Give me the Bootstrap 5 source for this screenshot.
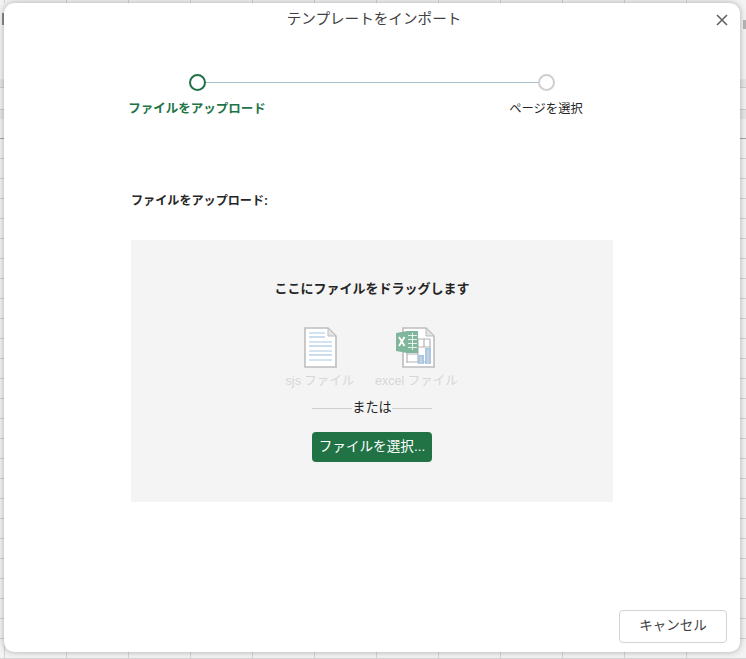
<!doctype html>
<html lang="ja"><head><meta charset="utf-8">
<link href="https://cdn.jsdelivr.net/npm/bootstrap@5.3.0/dist/css/bootstrap.min.css" rel="stylesheet">
<style>
html,body{height:100%;margin:0;overflow:hidden}
body{font-family:"Liberation Sans","Noto Sans CJK JP",sans-serif;background-color:#f3f3f3;
background-image:
 linear-gradient(#8c8c8c,#8c8c8c),
 linear-gradient(#b5b5b5,#b5b5b5),
 linear-gradient(#cfcfcf,#cfcfcf),
 linear-gradient(#cfcfcf,#cfcfcf),
 linear-gradient(#e6e6e6,#e6e6e6),
 linear-gradient(#e6e6e6,#e6e6e6),
 linear-gradient(#a8a8a8,#a8a8a8),
 linear-gradient(#f3f3f3,#f3f3f3),
 linear-gradient(#d4d4d4 1px,transparent 1px),
 linear-gradient(90deg,#d4d4d4 1px,transparent 1px);
background-size:2px 12px,3px 9px,100% 1px,100% 1px,100% 8px,100% 9px,100% 1px,100% 137px,62px 20px,62px 20px;
background-position:2px 13px,743px 20px,0 87px,0 109px,0 79px,0 110px,0 138px,0 3px,4px 18px,4px 18px;
background-repeat:no-repeat,no-repeat,no-repeat,no-repeat,no-repeat,no-repeat,no-repeat,no-repeat,repeat,repeat;
padding:3px 6px 7px 4px;color:#262626}
.dlg{width:736px;height:649px;background:#fff;border-radius:10px;box-shadow:0 0 6px rgba(0,0,0,.3)}
.dlg-title{height:31px;font-size:14.6px;line-height:33px;color:#404040;text-align:center;padding-left:4px}
.dlg-x{right:11px;top:10px;width:14px;height:14px}
.stepper{margin:40px 0 0 125px;width:485px;height:118px}
.step-col{width:136px;font-size:12.3px;white-space:nowrap}
.step-col.on{color:#217346;font-weight:700;font-size:12.5px}
.dot{width:17px;height:17px;border-radius:50%;border:2px solid #cfcfcf;background:#fff;z-index:1}
.on .dot{border-color:#217346}
.step-lab{margin-top:9px;line-height:18px}
.step-line{left:68px;right:68px;top:8px;height:1px;background:#a9bfcb}
.up-label{margin:0 0 0 127px;font-size:12.1px;font-weight:700;line-height:18px}
.drop{margin:30px 0 0 127px;width:482px;height:262px;background:#f4f4f4;padding-top:39px}
.drop-t{font-size:13px;font-weight:700;line-height:20px}
.files{margin-top:28px;gap:14.5px;height:73px;margin-right:8.5px}
.filecol{width:81px;font-size:12.5px;color:#d6d6d6;line-height:16px;white-space:nowrap}
.filecol svg{display:block;margin:0 auto 5px}
.orbox{width:120px;height:16px}
.orbox::before,.orbox::after{content:"";flex:1;height:1px;background:#cfcfcf}
.orbox{font-size:13.2px;line-height:16px;color:#1f1f1f}
.pick{margin-top:16px;width:120px;height:30px;background:#217346;border:0;border-radius:4px;color:#fff;font-size:13.6px;padding:0;line-height:30px}
.cancel{right:13px;bottom:9px;width:108px;height:33px;border:1px solid #d4d4d4;border-radius:4px;background:#fff;color:#404040;font-size:13.5px;padding:0}
</style></head><body>
<div class="dlg position-relative">
 <div class="dlg-title">テンプレートをインポート</div>
 <svg class="dlg-x position-absolute" viewBox="0 0 14 14"><path d="M2 2 12 12M12 2 2 12" stroke="#666" stroke-width="1.7" fill="none"/></svg>
 <div class="stepper position-relative d-flex justify-content-between">
  <div class="step-line position-absolute"></div>
  <div class="step-col on d-flex flex-column align-items-center"><div class="dot position-relative"></div><div class="step-lab">ファイルをアップロード</div></div>
  <div class="step-col d-flex flex-column align-items-center"><div class="dot position-relative"></div><div class="step-lab">ページを選択</div></div>
 </div>
 <p class="up-label">ファイルをアップロード:</p>
 <div class="drop d-flex flex-column align-items-center">
  <div class="drop-t">ここにファイルをドラッグします</div>
  <div class="files d-flex justify-content-center">
   <div class="filecol text-center">
    <svg width="33" height="41" viewBox="0 0 33 41"><path d="M1 1H24L32 9V40H1Z" fill="#fff" stroke="#bdbdbd" stroke-width="1.6"/><path d="M24 1V9H32Z" fill="#e4e4e4" stroke="#bdbdbd" stroke-width="1"/><path d="M5 6H21M5 15H28M5 24H28M5 33H28" stroke="#c5daec" stroke-width="1.4"/><path d="M5 10H21M5 19H28M5 28H28" stroke="#98bbda" stroke-width="1.1"/></svg>
    sjs ファイル</div>
   <div class="filecol text-center">
    <svg width="41" height="41" viewBox="0 0 41 41"><path d="M8 1H31L39 9V40H8Z" fill="#fff" stroke="#bdbdbd" stroke-width="1.6"/><path d="M31 1V9H39Z" fill="#e4e4e4" stroke="#bdbdbd" stroke-width="1"/><path d="M12 12H35M12 20H35M12 27H23M12 35H35M12 26V36M23 12V36M29 12V20M35 12V22" stroke="#b4b4b4" stroke-width="1.2" fill="none"/><path d="M23 28h6v9h-6zM30 21h6v16h-6z" fill="#a6c9ea"/><path d="M25 30h2v7h-2zM32 23h2v14h-2z" fill="#d0d0d0"/><path d="M1 6 12 4H23V26H12L1 24Z" fill="#80b79c"/><path d="M13 8.500H22M13 12.500H22M13 16.500H22M13 20.500H22M17.500 6V23" stroke="#fff" stroke-width=".8"/><path d="M4 10 9.500 19M9.500 10 4 19" stroke="#fff" stroke-width="1.800"/></svg>
    excel ファイル</div>
  </div>
  <div class="orbox d-flex align-items-center gap-0"><span>または</span></div>
  <button class="pick btn" type="button">ファイルを選択...</button>
 </div>
 <button class="cancel btn position-absolute" type="button">キャンセル</button>
</div>
<script src="https://cdn.jsdelivr.net/npm/bootstrap@5.3.0/dist/js/bootstrap.bundle.min.js"></script>
</body></html>
